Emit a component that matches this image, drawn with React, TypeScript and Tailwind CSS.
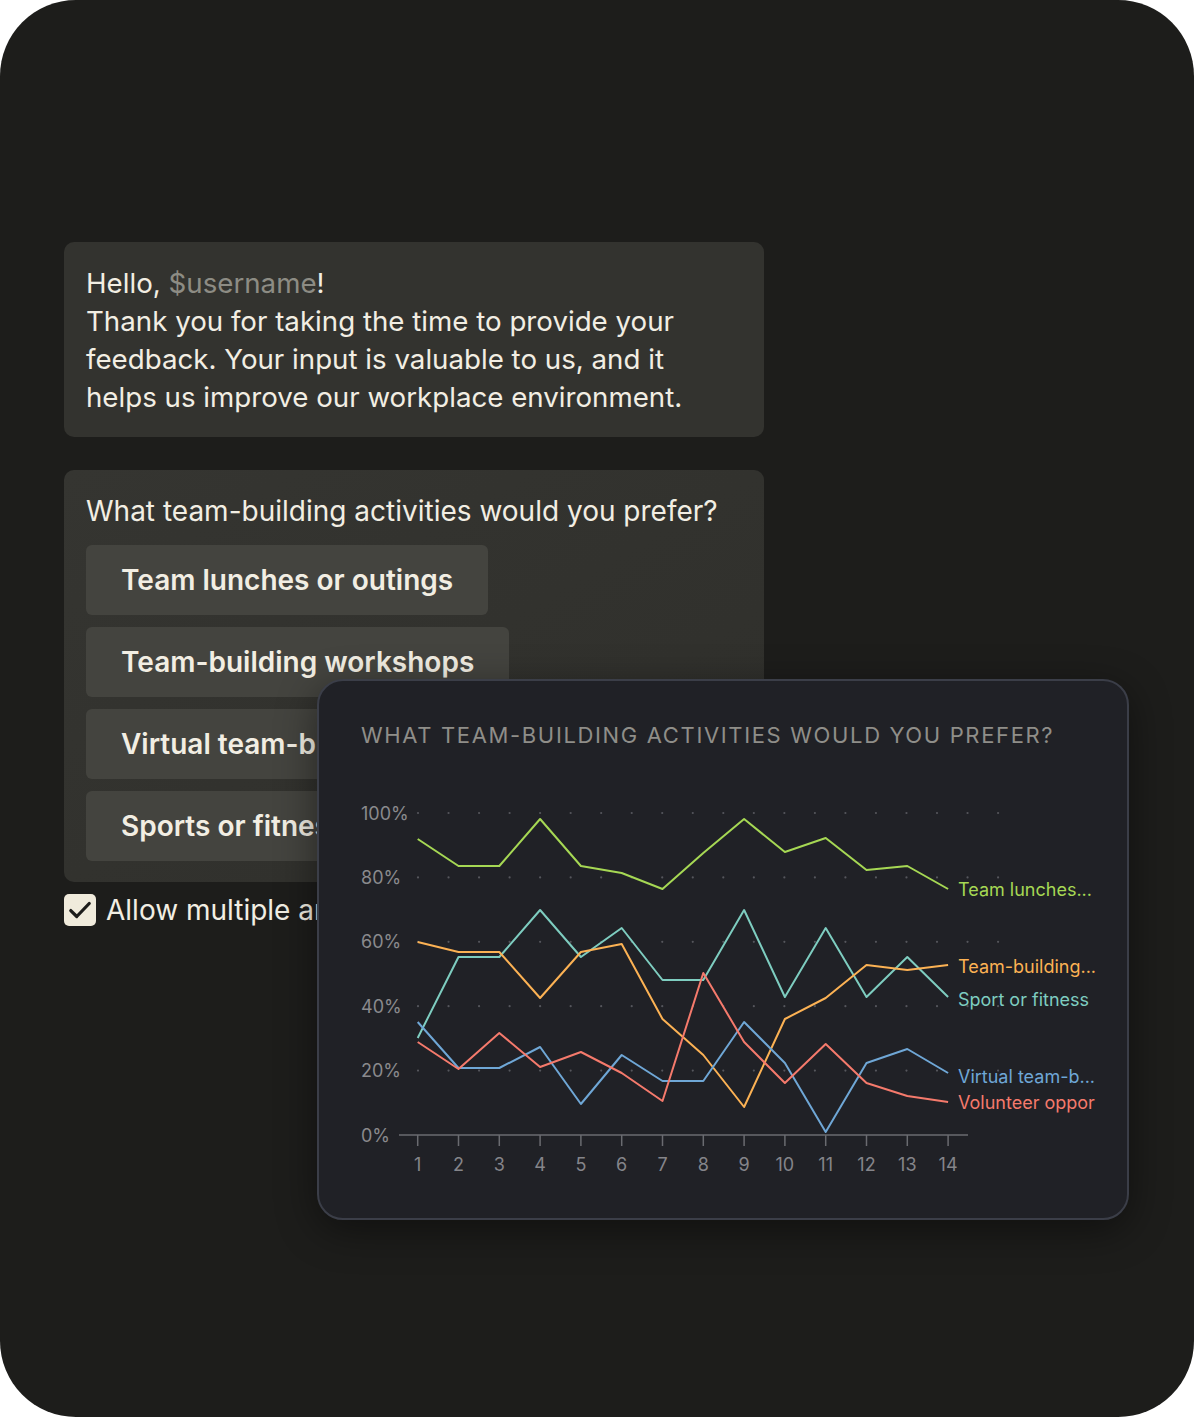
import React from 'react'

const OPTIONS = ['Team lunches or outings', 'Team-building workshops', 'Virtual team-building activities', 'Sports or fitness challenges']

// tick x positions for days 1..14
const X0 = 417.7
const STEP = 40.8
const xs = Array.from({ length: 14 }, (_, i) => X0 + i * STEP)

type Series = { name: string; color: string; ys: number[]; labelY: number }

const SERIES: Series[] = [
  {
    name: 'Team lunches...',
    color: '#a6d854',
    ys: [839, 866, 866, 819, 866, 873, 889, 853, 819, 852, 838, 870, 866, 889],
    labelY: 889,
  },
  {
    name: 'Sport or fitness',
    color: '#7ecdc0',
    ys: [1038, 957, 957, 910, 957, 928, 980, 980, 910, 997, 928, 997, 957, 997],
    labelY: 999,
  },
  {
    name: 'Team-building...',
    color: '#fcb254',
    ys: [942, 952, 952, 998, 952, 944, 1019, 1055, 1107, 1019, 998, 965, 970, 965],
    labelY: 966,
  },
  {
    name: 'Virtual team-b...',
    color: '#6fa7d6',
    ys: [1022, 1068, 1068, 1047, 1104, 1055, 1081, 1081, 1022, 1063, 1132, 1063, 1049, 1073],
    labelY: 1076,
  },
  {
    name: 'Volunteer oppor',
    color: '#f57a6c',
    ys: [1042, 1069, 1033, 1067, 1052, 1073, 1101, 973, 1042, 1083, 1044, 1083, 1096, 1102],
    labelY: 1102,
  },
]

const Y_LABELS = [
  { t: '100%', y: 813 },
  { t: '80%', y: 877.4 },
  { t: '60%', y: 941.8 },
  { t: '40%', y: 1006.2 },
  { t: '20%', y: 1070.6 },
  { t: '0%', y: 1135 },
]

function Chart() {
  const dotCols = Array.from({ length: 20 }, (_, i) => 418 + i * 30.53)
  const dotRows = [813, 877.4, 941.8, 1006.2, 1070.6]
  return (
    <svg width={808} height={469} viewBox="319 749 808 469" className="block font-['Inter']">
      {dotRows.map((y) =>
        dotCols.map((x) => <circle key={`${x}-${y}`} cx={x} cy={y} r={1.1} fill="#55565c" />)
      )}
      {Y_LABELS.map((l) => (
        <text key={l.t} x={361} y={l.y} dominantBaseline="central" fontSize={18} fill="#8a8a8d">
          {l.t}
        </text>
      ))}
      <line x1={399} y1={1135} x2={968} y2={1135} stroke="#6a6b70" strokeWidth={1.5} />
      {xs.map((x, i) => (
        <g key={i}>
          <line x1={x} y1={1135} x2={x} y2={1146} stroke="#6a6b70" strokeWidth={1.5} />
          <text x={x} y={1164} textAnchor="middle" dominantBaseline="central" fontSize={18} fill="#85858a">
            {i + 1}
          </text>
        </g>
      ))}
      {SERIES.map((s) => (
        <g key={s.name}>
          <polyline
            points={s.ys.map((y, i) => `${xs[i]},${y}`).join(' ')}
            fill="none"
            stroke={s.color}
            strokeWidth={2}
            strokeLinejoin="round"
          />
          <text x={958} y={s.labelY} dominantBaseline="central" fontSize={18} fill={s.color}>
            {s.name}
          </text>
        </g>
      ))}
    </svg>
  )
}

export default function App() {
  return (
    <div className="bg-white">
      <div className="relative h-[1417px] w-[1194px] overflow-hidden rounded-[76px] bg-[#1d1d1b] font-['Inter'] text-[#f2eee3]">
        <div className="w-[764px] pl-[64px] pt-[242px]">
          <div className="rounded-[10px] bg-[#33332f] px-[22px] pb-[21px] pt-[22px] text-[27.7px] leading-[38px]">
            <p>
              Hello, <span className="text-[#8d8c84]">$username</span>!
            </p>
            <p>
              Thank you for taking the time to provide your
              <br />
              feedback. Your input is valuable to us, and it
              <br />
              helps us improve our workplace environment.
            </p>
          </div>

          <div className="mt-[33px] rounded-[10px] bg-gradient-to-br from-[#353531] to-[#2f2f2b] px-[22px] pb-[21px] pt-[22px]">
            <p className="text-[28px] leading-[38px]">What team-building activities would you prefer?</p>
            <div className="mt-[15px] flex flex-col items-start gap-[12px]">
              {OPTIONS.map((o) => (
                <div
                  key={o}
                  className="flex h-[70px] items-center whitespace-nowrap rounded-[6px] bg-[#44443f] pl-[35px] pr-[35px] text-[28px] font-semibold"
                >
                  {o}
                </div>
              ))}
            </div>
          </div>

          <div className="mt-[9px] flex items-center gap-[10px]">
            <div className="flex h-[32px] w-[32px] items-center justify-center rounded-[5px] bg-[#f0ebdc]">
              <svg width="26" height="26" viewBox="0 0 24 24" fill="none">
                <path d="M3.5 12.5l5.5 5.5L20.5 6" stroke="#1d1d1b" strokeWidth="3" strokeLinecap="round" strokeLinejoin="round" />
              </svg>
            </div>
            <span className="whitespace-nowrap text-[28px] leading-[38px]">Allow multiple answers</span>
          </div>
        </div>

        <div className="absolute left-[317px] top-[679px] h-[541px] w-[812px] overflow-hidden rounded-[26px] border-2 border-[#3b3e48] bg-[#202126] shadow-[0_10px_40px_rgba(0,0,0,0.45)]">
          <p className="pl-[42px] pt-[40px] text-[22px] leading-[28px] tracking-[0.075em] text-[#8f8e89]">
            WHAT TEAM-BUILDING ACTIVITIES WOULD YOU PREFER?
          </p>
          <Chart />
        </div>
      </div>
    </div>
  )
}
